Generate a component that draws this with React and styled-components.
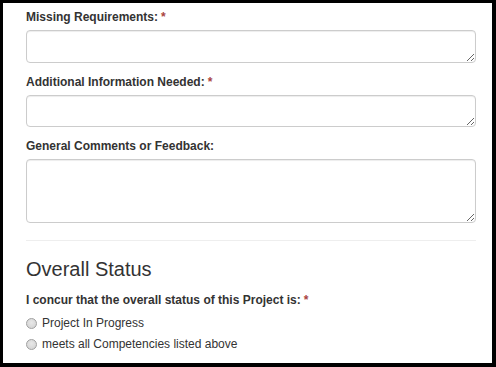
import React from 'react';
import styled, { createGlobalStyle } from 'styled-components';

const GlobalStyle = createGlobalStyle`
  html, body {
    margin: 0;
    padding: 0;
    background: #000;
  }
  body {
    font-family: "Liberation Sans", Arial, sans-serif;
    color: #333;
  }
`;

const Panel = styled.div`
  margin: 3px 4px 4px 3px;
  height: 360px;
  overflow: hidden;
  background: #fff;
  padding: 6px 16px 0 23px;
  box-sizing: border-box;
`;

const FormGroup = styled.div`
  display: flex;
  flex-direction: column;
  margin-bottom: 11px;
`;

const Label = styled.label`
  display: block;
  font-size: 12px;
  line-height: 17px;
  font-weight: bold;
  color: #333;
  margin-bottom: ${(p) => p.$mb ?? 4}px;
`;

const Required = styled.span`
  color: #a94442;
  margin-left: 3px;
`;

const TextArea = styled.textarea`
  display: block;
  width: 100%;
  height: ${(p) => p.$h}px;
  box-sizing: border-box;
  border: 1px solid #ccc;
  border-radius: 4px;
  box-shadow: inset 0 1px 1px rgba(0, 0, 0, 0.075);
  padding: 6px 12px;
  font-family: inherit;
  font-size: 12px;
  background: #fff;
  resize: vertical;
  outline: none;
`;

/* margin-top collapses with the form group's 11px */
const Divider = styled.hr`
  border: 0;
  border-top: 1px solid #eee;
  margin: 17px 0 17px;
`;

const Heading = styled.h3`
  margin: 0 0 12px;
  font-size: 20px;
  line-height: 22px;
  font-weight: 400;
  color: #333;
`;

const RadioList = styled.div`
  display: flex;
  flex-direction: column;
  gap: 4px;
  margin-top: 6px;
`;

const RadioRow = styled.label`
  display: flex;
  align-items: center;
  gap: 5px;
  font-size: 12px;
  line-height: 17px;
  color: #333;
`;

const Radio = styled.input.attrs({ type: 'radio' })`
  appearance: none;
  margin: 0;
  width: 11px;
  height: 11px;
  border-radius: 50%;
  border: 1px solid #a0a0a0;
  background: radial-gradient(circle at 50% 40%, #e8e8e8 0%, #d0d0d0 100%);
  box-sizing: border-box;
  flex: none;
`;

const fields = [
  { label: 'Missing Requirements:', required: true, h: 33 },
  { label: 'Additional Information Needed:', required: true, h: 32 },
  { label: 'General Comments or Feedback:', required: false, h: 64 },
];

const App = () => {
  return (
    <>
      <GlobalStyle />
      <Panel>
        {fields.map((f) => (
          <FormGroup key={f.label}>
            <Label>
              {f.label}
              {f.required && <Required>*</Required>}
            </Label>
            <TextArea $h={f.h} />
          </FormGroup>
        ))}
        <Divider />
        <Heading>Overall Status</Heading>
        <Label $mb={0}>
          I concur that the overall status of this Project is:
          <Required>*</Required>
        </Label>
        <RadioList>
          <RadioRow>
            <Radio name="status" />
            Project In Progress
          </RadioRow>
          <RadioRow>
            <Radio name="status" />
            meets all Competencies listed above
          </RadioRow>
        </RadioList>
      </Panel>
    </>
  );
};

export default App;
